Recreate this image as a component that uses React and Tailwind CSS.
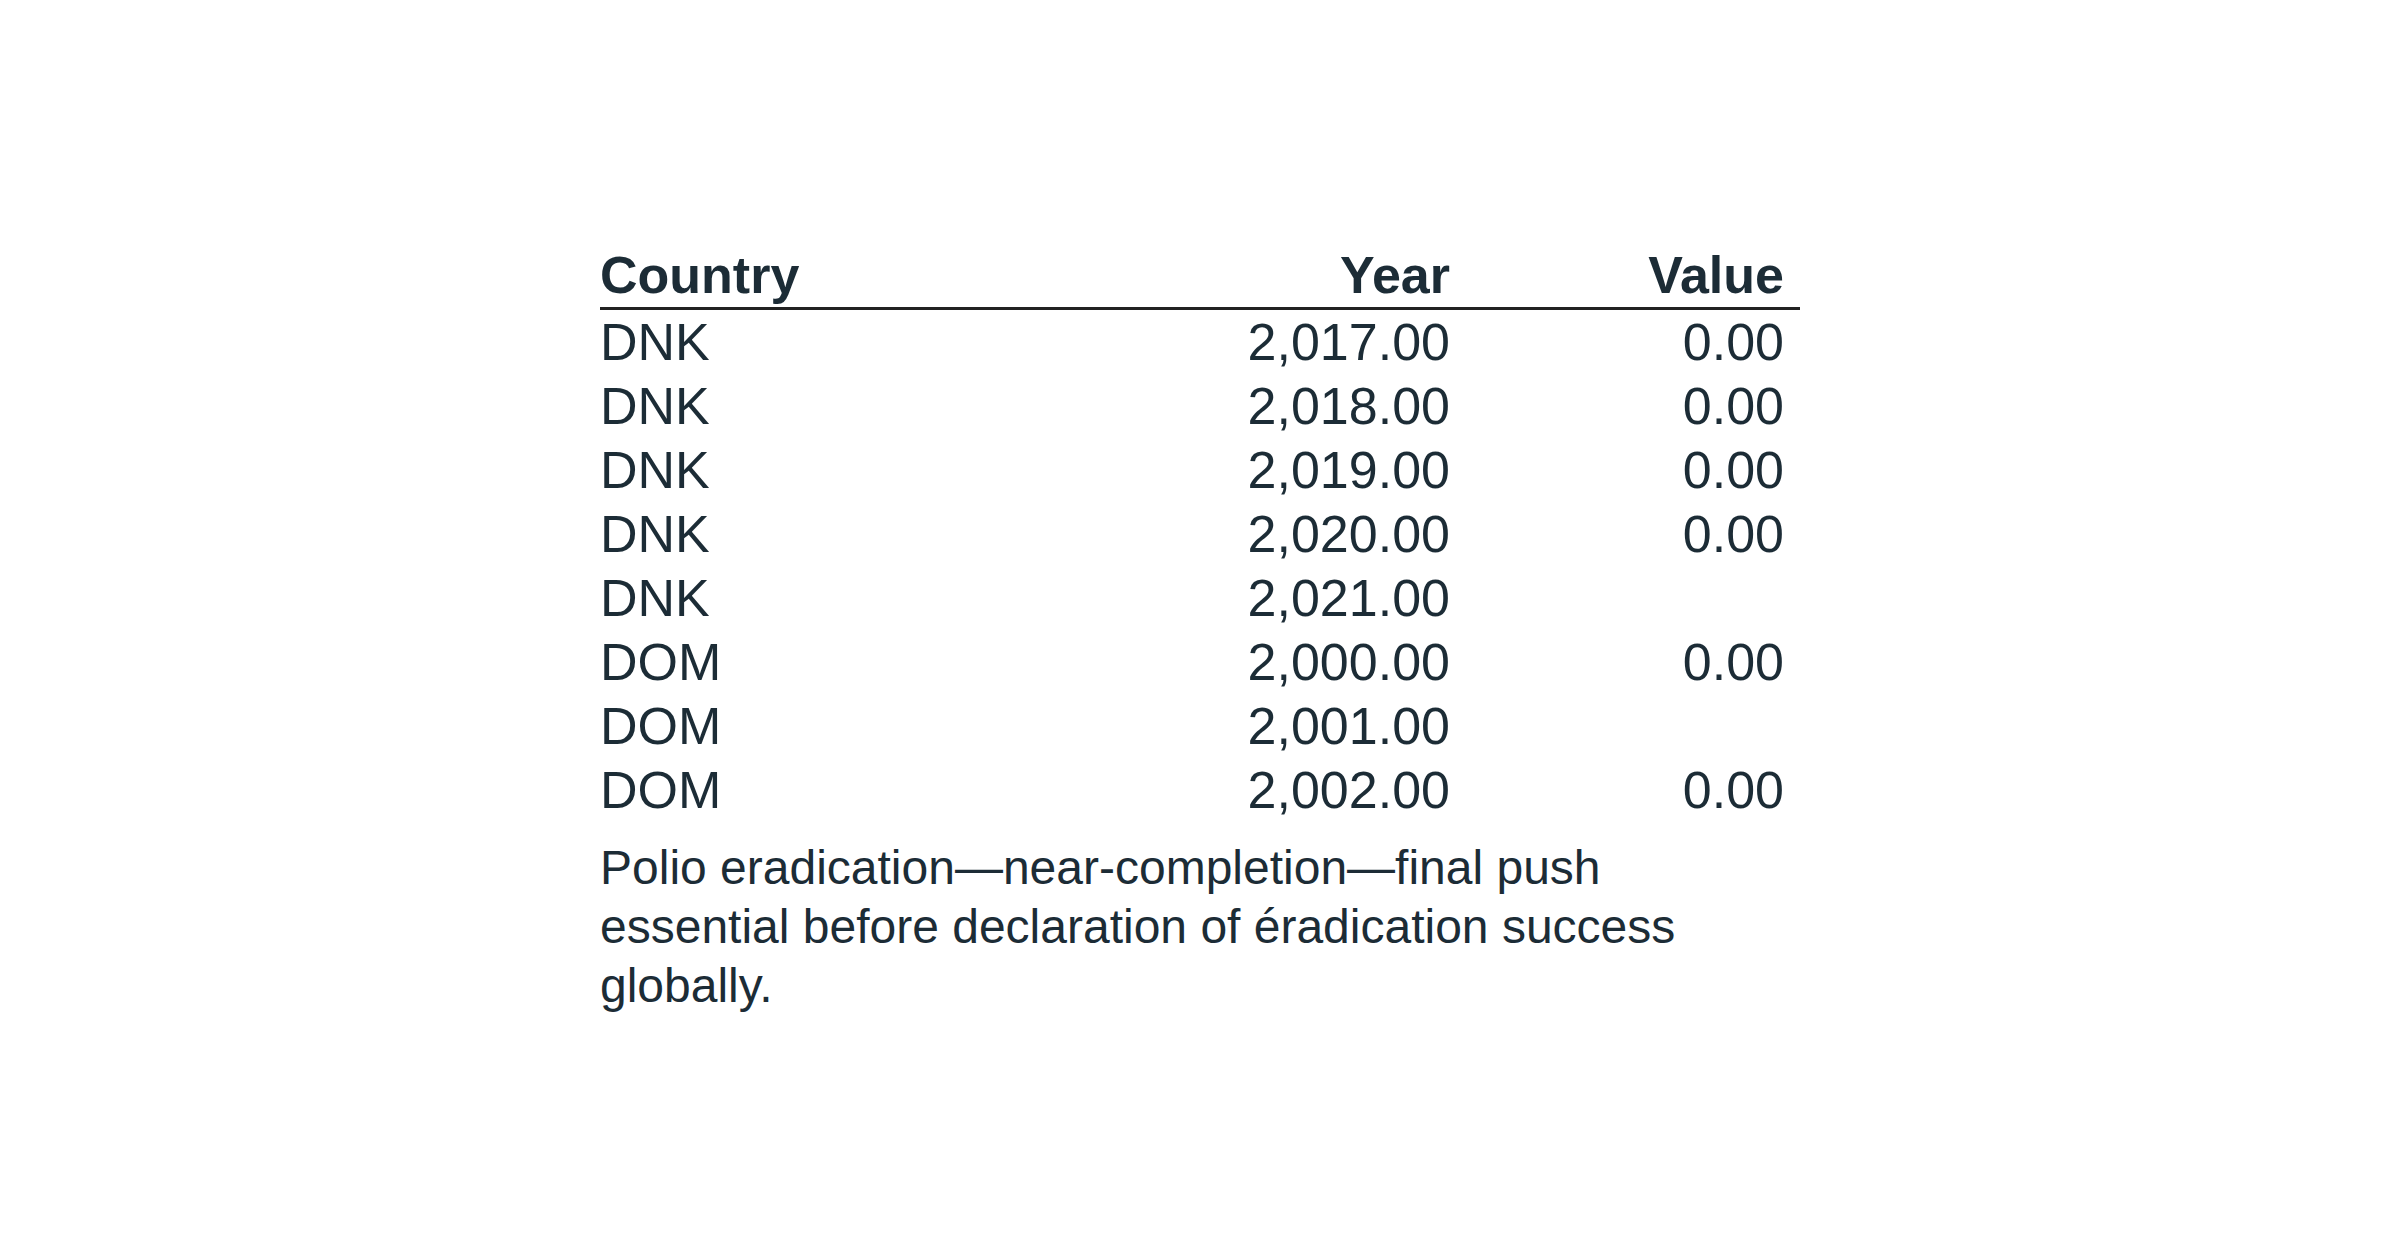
import React from "react";

const rows = [
  ["DNK", "2,017.00", "0.00"],
  ["DNK", "2,018.00", "0.00"],
  ["DNK", "2,019.00", "0.00"],
  ["DNK", "2,020.00", "0.00"],
  ["DNK", "2,021.00", ""],
  ["DOM", "2,000.00", "0.00"],
  ["DOM", "2,001.00", ""],
  ["DOM", "2,002.00", "0.00"],
];

export default function App() {
  return (
    <div className="min-h-[1256px] bg-white pt-[243px] text-[#1c2c36] [font-family:'Liberation_Sans',Arial,sans-serif]">
      <div className="mx-auto w-[1200px]">
        <div className="grid grid-cols-[500px_366px_334px] border-b-[3px] border-[#222222] text-[52px] font-bold leading-[64px]">
          <div>Country</div>
          <div className="pr-4 text-right">Year</div>
          <div className="pr-4 text-right">Value</div>
        </div>
        {rows.map((r, i) => (
          <div key={i} className="grid grid-cols-[500px_366px_334px] text-[52px] leading-[64px]">
            <div>{r[0]}</div>
            <div className="pr-4 text-right">{r[1]}</div>
            <div className="pr-4 text-right">{r[2]}</div>
          </div>
        ))}
        <p className="mt-[16px] w-[1120px] text-[48px] leading-[59px]">
          Polio eradication—near-completion—final push essential before declaration of éradication success globally.
        </p>
      </div>
    </div>
  );
}
